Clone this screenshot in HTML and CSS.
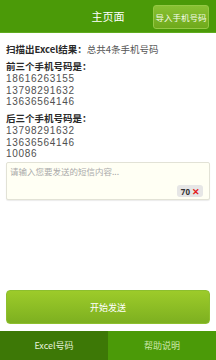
FILE: index.html
```html
<!DOCTYPE html>
<html lang="zh">
<head>
<meta charset="utf-8">
<link rel="stylesheet" href="styles.css">
</head>
<body>
<div class="app">
  <header class="topbar">
    <div class="title">主页面</div>
    <button class="import-btn">导入手机号码</button>
  </header>
  <main class="content">
    <div class="line label">扫描出Excel结果：<span class="normal">总共4条手机号码</span></div>
    <div class="group first">
      <div class="line label">前三个手机号码是：</div>
      <div class="num">18616263155</div>
      <div class="num">13798291632</div>
      <div class="num">13636564146</div>
    </div>
    <div class="group second">
      <div class="line label">后三个手机号码是：</div>
      <div class="num">13798291632</div>
      <div class="num">13636564146</div>
      <div class="num">10086</div>
    </div>
    <div class="msgbox">
      <div class="placeholder">请输入您要发送的短信内容...</div>
      <div class="counter"><span>70</span><span class="x">✕</span></div>
    </div>
    <div class="spacer"></div>
    <button class="send-btn">开始发送</button>
  </main>
  <nav class="tabs">
    <div class="tab active">Excel号码</div>
    <div class="tab">帮助说明</div>
  </nav>
</div>
</body>
</html>
```
FILE: styles.css
```css
* { box-sizing: border-box; margin: 0; padding: 0; }
html, body { width: 216px; height: 360px; overflow: hidden; background: #fff; }
body { font-family: "Noto Sans CJK SC", "Open Sans", sans-serif; color: #333; }
.app { display: flex; flex-direction: column; height: 360px; }
.topbar {
  height: 33px; flex: none; background: #4b9a08;
  border-bottom: 1px solid #5fab1e;
  display: flex; align-items: center; justify-content: center; position: relative;
}
.title { color: #fff; font-size: 11px; line-height: 1; }
.import-btn {
  position: absolute; right: 7px; top: 5px; width: 56px; height: 24px;
  border: 1px solid #94c843; border-radius: 3px;
  background: linear-gradient(#88c132, #6fa91c);
  color: #f4fbe8; font-family: "Noto Sans CJK SC", sans-serif; font-size: 8.5px;
  display: flex; align-items: center; justify-content: center;
}
.content { flex: 1; display: flex; flex-direction: column; padding: 9px 6px 7px 6px; }
.line { font-size: 9.5px; line-height: 14px; }
.label { font-weight: bold; color: #2a2a2a; }
.normal { font-weight: normal; color: #555; }
.group.first { margin-top: 3px; }
.group.second { margin-top: 3.5px; }
.num { font-family: "Liberation Sans", Arial, sans-serif; font-size: 10px; letter-spacing: 0.7px; line-height: 11.5px; color: #505050; }
.msgbox {
  margin-top: 2.5px; height: 38px; background: #fffff4;
  border: 1px solid #e2e2d6; border-radius: 2px; box-shadow: 0 1px 1px rgba(0,0,0,0.08);
  display: flex; flex-direction: column; padding: 2px 6px 2px 3px;
}
.placeholder { font-size: 8.5px; line-height: 12px; color: #aaa; flex: 1; }
.counter {
  align-self: flex-end; background: #e6e6e6; border-radius: 3px;
  height: 12px; padding: 0 3px 0 4px; display: flex; align-items: center; gap: 2px;
  font-family: "Open Sans", sans-serif; font-size: 8px; font-weight: bold; color: #333;
}
.counter .x { color: #e31b1b; font-size: 9px; font-weight: bold; }
.spacer { flex: 1; }
.send-btn {
  height: 34px; border: 1px solid #8dbf2e; border-radius: 4px;
  background: linear-gradient(#9dcb2a, #7db020);
  color: #fff; font-family: "Noto Sans CJK SC", sans-serif; font-size: 9px;
}
.tabs { height: 29px; flex: none; display: flex; }
.tab {
  flex: 1; display: flex; align-items: center; justify-content: center;
  background: #4b9a08; color: #cbe7a8; font-size: 9px;
}
.tab.active { background: #3d7806; color: #e6f2da; }
```
